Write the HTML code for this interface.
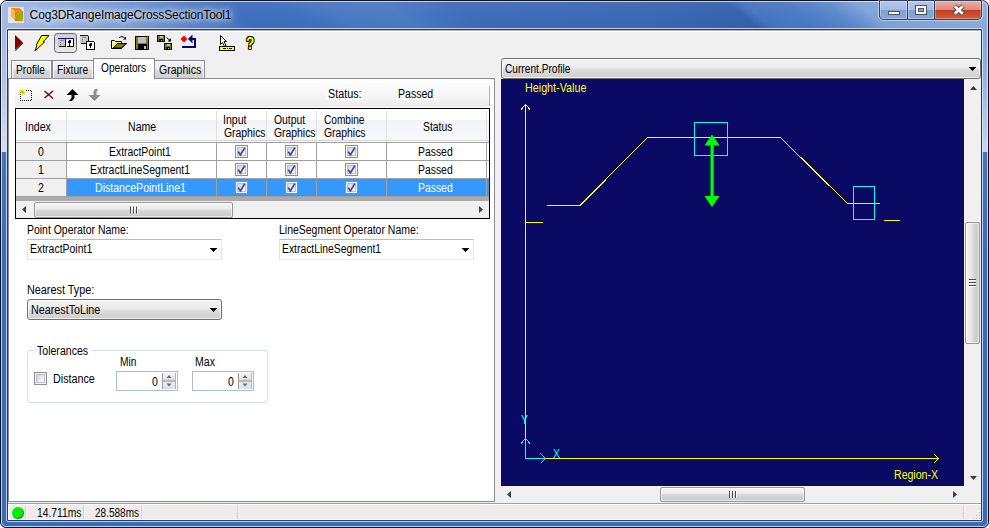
<!DOCTYPE html>
<html>
<head>
<meta charset="utf-8">
<title>Cog3DRangeImageCrossSectionTool1</title>
<style>
html,body{margin:0;padding:0;}
body{width:989px;height:528px;overflow:hidden;background:#fff;font-family:"Liberation Sans",sans-serif;font-size:11px;color:#000;position:relative;}
.a{position:absolute;}
.t{position:absolute;white-space:nowrap;font-size:12px;line-height:14px;height:14px;transform-origin:0 0;}
#frame{left:0;top:0;width:989px;height:528px;box-sizing:border-box;border-radius:7px 7px 6px 6px;border:1px solid #10131c;overflow:hidden;background:linear-gradient(#4473c1 151px,#3a6bbb 260px);}
#frame2{left:1px;top:1px;width:987px;height:526px;box-sizing:border-box;border-radius:6px 6px 5px 5px;border:1px solid rgba(235,243,255,.75);}
#tbar{left:0;top:0;width:989px;height:30px;background:linear-gradient(38.7deg,#a4bde5 11.7px,#9ab5e1 36.7px,#7c9fd7 80.5px,#5583c9 130.4px,#3f6ebb 161.7px,#4070bd 199.2px,#4979c3 224.2px,#4b7bc4 261.7px,#4473bf 280.4px,#3e6cb9 305.4px,#3b68b4 411.7px,#3562ac 475.4px,#4575c0 484.8px,#4a7ac4 511.7px,#5c89cc 538.0px,#7fa2d8 556.7px,#86a9dd 593.0px,#8dafe0 629.8px);}
#tbarhi{left:0;top:0;width:989px;height:30px;background:linear-gradient(rgba(255,255,255,.05),rgba(255,255,255,0) 60%,rgba(0,0,40,.03));}
#lside{left:0;top:30px;width:8px;height:121px;background:linear-gradient(#a4bde5,#a9c1e7 30%,#d0def3);}
#rside{left:981px;top:30px;width:8px;height:121px;background:linear-gradient(#86a8dc,#8fafe0 30%,#c5d6f0);}
#clientedge{left:6px;top:28px;width:977px;height:494px;box-sizing:border-box;border:1px solid rgba(214,228,247,.85);border-radius:2px;}
#clientedge2{left:7px;top:29px;width:975px;height:492px;box-sizing:border-box;border:1px solid #263b60;border-radius:1px;}
#client{left:8px;top:30px;width:973px;height:490px;background:#f0f0f0;}
#title{text-shadow:0 0 5px rgba(255,255,255,.95),0 0 9px rgba(255,255,255,.8),0 0 14px rgba(255,255,255,.6);}
.tab{box-sizing:border-box;border:1px solid #898c95;border-bottom:none;box-shadow:inset 1px 1px 0 rgba(255,255,255,.85),inset -1px 0 0 rgba(255,255,255,.85);background:linear-gradient(#f2f2f2 0%,#ebebeb 50%,#dddddd 50%,#cfcfcf 100%);}
#tabpage{left:8px;top:78px;width:487px;height:424px;box-sizing:border-box;background:#fff;border:1px solid #898c95;}
#grid{left:15px;top:108px;width:475px;height:111px;box-sizing:border-box;border:1px solid #000;background:#ababab;overflow:hidden;}
.ck{width:13px;height:13px;box-sizing:border-box;border:1px solid #8e8f8f;background:#f4f4f4;}
.ck:before{content:"";position:absolute;left:1px;top:1px;width:9px;height:9px;box-sizing:border-box;border:1px solid #b9c0c8;background:linear-gradient(135deg,#cfd4da,#f6f6f6 80%);}
.ck svg{position:absolute;left:-1px;top:-1px;}
.cmbw{box-sizing:border-box;border:1px solid #e2e3ea;border-color:#b9bcc4 #e2e6ec #e6eaf0 #e2e3ea;background:#fff;border-radius:1px;}
.cmbg{box-sizing:border-box;border:1px solid #707070;border-radius:3px;background:linear-gradient(#f2f2f2 0,#ebebeb 48%,#dddddd 52%,#cfcfcf 100%);box-shadow:inset 0 0 0 1px rgba(255,255,255,.7);}
.thumbh{box-sizing:border-box;border:1px solid #979797;border-radius:2px;background:linear-gradient(#f5f5f5 0,#e9e9e9 45%,#d9d9d9 50%,#c8c8c8 100%);box-shadow:inset 0 0 0 1px rgba(255,255,255,.6);}
.thumbv{box-sizing:border-box;border:1px solid #979797;border-radius:2px;background:linear-gradient(90deg,#f3f3f3 0,#e8e8e8 40%,#d6d6d8 60%,#c6c6ca 100%);box-shadow:inset 0 0 0 1px rgba(255,255,255,.6);}
</style>
</head>
<body>
<div id="frame" class="a"><div id="tbar" class="a"></div><div id="tbarhi" class="a"></div><div id="lside" class="a"></div><div id="rside" class="a"></div></div>
<div id="frame2" class="a"></div>
<div id="clientedge" class="a"></div><div id="clientedge2" class="a"></div>
<div id="client" class="a"></div>
<div class="a" style="left:8px;top:30px;width:973px;height:1px;background:#b8b8b8;"></div>
<div class="a" style="left:8px;top:31px;width:973px;height:1px;background:#fff;"></div>
<div class="a" style="left:8px;top:31px;width:1px;height:26px;background:#fff;"></div>
<svg class="a" style="left:8px;top:7px;" width="16" height="16" viewBox="0 0 16 16" shape-rendering="crispEdges">
<rect width="16" height="16" fill="#e4e4e4"/>
<path d="M3 1H11L15 5V14H7L3 10z" fill="#e67e00"/>
<path d="M3 1H11L15 5H7z" fill="#f28c0a"/>
<path d="M3 1L7 5V14L3 10z" fill="#ffb347"/>
<path d="M6.5 12.5L9.5 6.5H12.5V12.5H15" fill="none" stroke="#1fff1f" stroke-width="1" shape-rendering="auto"/>
</svg>
<div id="title" class="t" style="left:29.62px;top:8px;letter-spacing:-0.139px;">Cog3DRangeImageCrossSectionTool1</div>
<div class="a" style="left:878px;top:0;width:105px;height:21px;border-radius:0 0 6px 6px;background:rgba(225,236,252,.55);"></div>
<div class="a" style="left:879px;top:0;width:103px;height:20px;box-sizing:border-box;border:1px solid #33425f;border-top:none;border-radius:0 0 5px 5px;overflow:hidden;background:#33425f;">
<div class="a" style="left:0;top:1px;width:27px;height:18px;background:linear-gradient(#b4c9ea 0,#a3bce3 48%,#7f9fd0 50%,#88a8d8 100%);box-shadow:inset 0 0 0 1px rgba(255,255,255,.35);"></div>
<div class="a" style="left:28px;top:1px;width:26px;height:18px;background:linear-gradient(#b4c9ea 0,#a3bce3 48%,#7f9fd0 50%,#88a8d8 100%);box-shadow:inset 0 0 0 1px rgba(255,255,255,.35);"></div>
<div class="a" style="left:55px;top:1px;width:46px;height:18px;background:linear-gradient(#eab0a4 0,#dc8c7c 48%,#c23a22 50%,#d2603f 100%);box-shadow:inset 0 0 0 1px rgba(255,255,255,.3);"></div>
</div>
<svg class="a" style="left:879px;top:0;" width="102" height="20" viewBox="879 0 102 20">
<rect x="888.5" y="11.5" width="11" height="3" fill="#fff" stroke="#4b5568" stroke-width="1"/>
<rect x="915.5" y="5.5" width="11" height="9" fill="#fff" stroke="#4b5568" stroke-width="1"/>
<rect x="918.5" y="8.5" width="5" height="3" fill="#86a5d6" stroke="#4b5568" stroke-width="1"/>
<path d="M954.5 6L963 14M963 6L954.5 14" stroke="#4b4f5c" stroke-width="4.8" fill="none"/>
<path d="M954.8 6.3L962.7 13.7M962.7 6.3L954.8 13.7" stroke="#fff" stroke-width="2.8" fill="none"/>
</svg>
<svg class="a" style="left:8px;top:30px;" width="260" height="26" viewBox="8 30 260 26" shape-rendering="crispEdges">
<!-- run -->
<path d="M15 35L23 42.5L15 50z" fill="#800000" shape-rendering="auto"/>
<path d="M23 43L15.5 50.5" stroke="#000" stroke-width="1" shape-rendering="auto"/>
<!-- lightning -->
<path d="M41.500 35.500H49L43 42H44.500L35 51L37 45L36.500 44.500z" fill="#ffff00" stroke="#000" stroke-width="1" shape-rendering="auto"/>
<!-- pressed button -->
<defs><linearGradient id="pb" x1="0" y1="0" x2="0" y2="1"><stop offset="0" stop-color="#cfcfcf"/><stop offset="1" stop-color="#e9e9e9"/></linearGradient></defs><rect x="54.5" y="33.5" width="22" height="19" rx="3" ry="3" fill="url(#pb)" stroke="#6a6a6a" shape-rendering="auto"/>
<!-- icon3 -->
<rect x="58" y="38" width="8" height="9" fill="#c8c8c8"/><rect x="58" y="38" width="8" height="1" fill="#0000d0"/>
<path d="M58.5 46.5H65.5V39" fill="none" stroke="#000"/>
<rect x="60" y="40" width="4" height="1" fill="#909090"/><rect x="60" y="42" width="1" height="1" fill="#808080"/><rect x="60" y="44" width="1" height="1" fill="#808080"/>
<rect x="66" y="38" width="8" height="9" fill="#fff"/><rect x="66" y="38" width="8" height="1" fill="#0000d0"/>
<path d="M66.5 46.5H73.5V39" fill="none" stroke="#000"/>
<rect x="68" y="40" width="3" height="3" fill="#000"/><rect x="69" y="43" width="1" height="3" fill="#000"/><rect x="68" y="40" width="1" height="1" fill="#fff"/>
<!-- icon4 -->
<rect x="80" y="35" width="8" height="8" fill="#c8c8c8"/><rect x="80" y="35" width="8" height="1" fill="#0000d0"/>
<path d="M80.5 43.5H88.5V36" fill="none" stroke="#000"/>
<rect x="82" y="37" width="4" height="1" fill="#909090"/><rect x="82" y="39" width="1" height="1" fill="#808080"/><rect x="82" y="41" width="1" height="1" fill="#808080"/>
<rect x="86" y="41" width="8" height="8" fill="#fff"/><rect x="86" y="41" width="8" height="1" fill="#0000d0"/>
<path d="M86.5 42V49.5H94.5V42" fill="none" stroke="#000"/>
<rect x="89" y="43" width="3" height="3" fill="#000"/><rect x="90" y="46" width="1" height="2" fill="#000"/><rect x="89" y="43" width="1" height="1" fill="#fff"/>
<!-- open -->
<path d="M111.5 40.5H114.5L115.5 41.5H121.5V43.5H126.5L121.5 48.5H111.5z" fill="#ffff80" stroke="#000" shape-rendering="auto"/>
<path d="M113 48L117.5 43.5H126L121.5 48z" fill="#808000" stroke="#000" stroke-width="1" shape-rendering="auto"/>
<path d="M119 38Q122 35 125 38.5" fill="none" stroke="#000" shape-rendering="auto"/><path d="M123 39.5H126V36.5z" fill="#000" shape-rendering="auto"/>
<!-- save -->
<rect x="135" y="36" width="14" height="14" fill="#808000"/><rect x="135.5" y="36.5" width="13" height="13" fill="none" stroke="#000"/>
<rect x="138" y="37" width="8" height="6" fill="#c0c0c0"/><rect x="138" y="44" width="9" height="5" fill="#000"/><rect x="144" y="46" width="2" height="3" fill="#c0c0c0"/><rect x="147" y="37" width="1" height="1" fill="#fff"/>
<!-- save all -->
<rect x="157" y="35" width="8" height="7" fill="#000"/><rect x="158" y="36" width="6" height="5" fill="#808000"/><rect x="159.500" y="36" width="3" height="2" fill="#c0c0c0"/><rect x="159" y="39" width="4" height="2" fill="#000"/><rect x="161" y="40" width="1" height="1" fill="#c0c0c0"/>
<rect x="164" y="43" width="8" height="7" fill="#000"/><rect x="165" y="44" width="6" height="5" fill="#808000"/><rect x="166.500" y="44" width="3" height="2" fill="#c0c0c0"/><rect x="166" y="47" width="4" height="2" fill="#000"/><rect x="168" y="48" width="1" height="1" fill="#c0c0c0"/>
<path d="M166.500 37.500L170 40.500" stroke="#000" shape-rendering="auto"/><path d="M171 38V41.500H167.500z" fill="#000" shape-rendering="auto"/>
<!-- red diamond + blue arrow -->
<path d="M184 35.500L187.500 39L184 42.500L180.500 39z" fill="#ff0000" shape-rendering="auto"/>
<path d="M188 39L192.500 34.500V43.500z" fill="#000080" shape-rendering="auto"/>
<path d="M192 38H196V48H182V46H194V40H192z" fill="#000080"/>
<!-- cursor + ruler -->
<path d="M220.500 35.500V44.500L222.500 42.500L224.500 46.500L226 45.500L224 41.500H226.500z" fill="#fff" stroke="#000" shape-rendering="auto"/>
<rect x="219.500" y="46.500" width="15" height="4" fill="#ffff00" stroke="#000"/>
<rect x="223" y="48" width="3" height="1" fill="#000"/><rect x="227" y="48" width="1" height="1" fill="#000"/><rect x="229" y="48" width="3" height="1" fill="#000"/>
</svg>
<div id="qm" class="t" style="left:246px;top:34px;font-size:17px;line-height:19px;height:19px;font-weight:bold;color:#ffff00;text-shadow:1px 0 #000,-1px 0 #000,0 1px #000,0 -1px #000,1px 1px #000,-1px -1px #000,1px -1px #000,-1px 1px #000;transform:scaleX(0.8);">?</div>
<div id="tabpage" class="a"></div>
<div class="a tab" style="left:11px;top:60px;width:41px;height:18px;"></div>
<div class="a tab" style="left:52px;top:60px;width:42px;height:18px;"></div>
<div class="a tab" style="left:153px;top:60px;width:52px;height:18px;"></div>
<div class="a tab" style="left:93px;top:58px;width:62px;height:21px;background:#fff;"></div>
<div id="tProfile" class="t" style="left:15.58px;top:63px;transform:scaleX(0.8533);">Profile</div>
<div id="tFixture" class="t" style="left:56.92px;top:63px;transform:scaleX(0.8485);">Fixture</div>
<div id="tOperators" class="t" style="left:100.90px;top:61px;transform:scaleX(0.8442);">Operators</div>
<div id="tGraphics" class="t" style="left:158.88px;top:63px;transform:scaleX(0.8800);">Graphics</div>
<div class="a" style="left:15px;top:83px;width:475px;height:24px;border-radius:0 0 3px 3px;background:linear-gradient(#fcfcfc,#f6f6f6 50%,#ebebeb);"></div>
<div class="a" style="left:489px;top:86px;width:1px;height:20px;background:#b0b0b0;"></div>
<svg class="a" style="left:15px;top:83px;" width="100" height="24" viewBox="15 83 100 24" shape-rendering="crispEdges">
<path d="M20.500 92V100.500H31.500V90.500H26" fill="none" stroke="#000" stroke-width="1" stroke-dasharray="1 1"/>
<path d="M19 92H26M22.500 88.500V95.500M20 89.500L25 94.500M25 89.500L20 94.500" stroke="#e8e800" stroke-width="1" shape-rendering="auto"/>
<path d="M21 90.500L24 93.500" stroke="#707070" stroke-width="1" shape-rendering="auto"/>
<path d="M44.500 91L53 98.500M53 91L44.500 98" stroke="#800000" stroke-width="1.500" shape-rendering="auto"/>
<path d="M72.500 89L78.500 95H74.500V98L72 101H69L71.500 98V95H66.500z" fill="#000" shape-rendering="auto"/>
<path d="M94.500 101L100.500 95H96.500V92L98 89H95L93.500 91.500V95H88.500z" fill="#8c8c8c" shape-rendering="auto"/>
</svg>
<div class="a" style="left:325px;top:87px;width:40px;height:13px;background:#fbfbfb;"></div>
<div class="a" style="left:395px;top:87px;width:42px;height:13px;background:#fbfbfb;"></div>
<div id="sStatus" class="t" style="left:328.00px;top:87px;transform:scaleX(0.8976);">Status:</div>
<div id="sPassed" class="t" style="left:397.60px;top:87px;transform:scaleX(0.8800);">Passed</div>
<div id="grid" class="a">
<div class="a" style="left:0;top:0;width:473px;height:31px;background:linear-gradient(#fff 0,#fff 11px,#f3f4f7 11px,#f8f9fb 31px);"></div>
<div class="a" style="left:0;top:31px;width:473px;height:1px;background:#d5d5d5;"></div>
<div class="a" style="left:0;top:32px;width:473px;height:1px;background:#fff;"></div>
<div class="a" style="left:0;top:33px;width:473px;height:1px;background:#a0a0a0;"></div>
<div class="a" style="left:50px;top:2px;width:1px;height:29px;background:#dfe2e8;"></div>
<div class="a" style="left:200px;top:2px;width:1px;height:29px;background:#dfe2e8;"></div>
<div class="a" style="left:250px;top:2px;width:1px;height:29px;background:#dfe2e8;"></div>
<div class="a" style="left:300px;top:2px;width:1px;height:29px;background:#dfe2e8;"></div>
<div class="a" style="left:370px;top:2px;width:1px;height:29px;background:#dfe2e8;"></div>
<div class="a" style="left:470px;top:2px;width:1px;height:29px;background:#dfe2e8;"></div>
<div class="a" style="left:473px;top:2px;width:1px;height:29px;background:#dfe2e8;"></div>
<div class="a" style="left:0;top:34px;width:473px;height:17px;background:#fff;"></div>
<div class="a" style="left:0;top:51px;width:473px;height:1px;background:#a0a0a0;"></div>
<div class="a" style="left:0;top:34px;width:50px;height:17px;background:#f0f0f0;"></div>
<div class="a" style="left:50px;top:34px;width:1px;height:17px;background:#a0a0a0;"></div>
<div class="a" style="left:200px;top:34px;width:1px;height:17px;background:#a0a0a0;"></div>
<div class="a" style="left:250px;top:34px;width:1px;height:17px;background:#a0a0a0;"></div>
<div class="a" style="left:300px;top:34px;width:1px;height:17px;background:#a0a0a0;"></div>
<div class="a" style="left:370px;top:34px;width:1px;height:17px;background:#a0a0a0;"></div>
<div class="a" style="left:470px;top:34px;width:1px;height:17px;background:#a0a0a0;"></div>
<div class="a" style="left:473px;top:34px;width:1px;height:17px;background:#a0a0a0;"></div>
<div class="a ck" style="left:219px;top:36px;"><svg width="13" height="13" viewBox="0 0 13 13"><path d="M3.2 6.6 L5.4 10 L9.8 2.6" fill="none" stroke="#31479b" stroke-width="1.7"/></svg></div>
<div class="a ck" style="left:269px;top:36px;"><svg width="13" height="13" viewBox="0 0 13 13"><path d="M3.2 6.6 L5.4 10 L9.8 2.6" fill="none" stroke="#31479b" stroke-width="1.7"/></svg></div>
<div class="a ck" style="left:329px;top:36px;"><svg width="13" height="13" viewBox="0 0 13 13"><path d="M3.2 6.6 L5.4 10 L9.8 2.6" fill="none" stroke="#31479b" stroke-width="1.7"/></svg></div>
<div class="a" style="left:0;top:52px;width:473px;height:17px;background:#fff;"></div>
<div class="a" style="left:0;top:69px;width:473px;height:1px;background:#a0a0a0;"></div>
<div class="a" style="left:0;top:52px;width:50px;height:17px;background:#f0f0f0;"></div>
<div class="a" style="left:50px;top:52px;width:1px;height:17px;background:#a0a0a0;"></div>
<div class="a" style="left:200px;top:52px;width:1px;height:17px;background:#a0a0a0;"></div>
<div class="a" style="left:250px;top:52px;width:1px;height:17px;background:#a0a0a0;"></div>
<div class="a" style="left:300px;top:52px;width:1px;height:17px;background:#a0a0a0;"></div>
<div class="a" style="left:370px;top:52px;width:1px;height:17px;background:#a0a0a0;"></div>
<div class="a" style="left:470px;top:52px;width:1px;height:17px;background:#a0a0a0;"></div>
<div class="a" style="left:473px;top:52px;width:1px;height:17px;background:#a0a0a0;"></div>
<div class="a ck" style="left:219px;top:54px;"><svg width="13" height="13" viewBox="0 0 13 13"><path d="M3.2 6.6 L5.4 10 L9.8 2.6" fill="none" stroke="#31479b" stroke-width="1.7"/></svg></div>
<div class="a ck" style="left:269px;top:54px;"><svg width="13" height="13" viewBox="0 0 13 13"><path d="M3.2 6.6 L5.4 10 L9.8 2.6" fill="none" stroke="#31479b" stroke-width="1.7"/></svg></div>
<div class="a ck" style="left:329px;top:54px;"><svg width="13" height="13" viewBox="0 0 13 13"><path d="M3.2 6.6 L5.4 10 L9.8 2.6" fill="none" stroke="#31479b" stroke-width="1.7"/></svg></div>
<div class="a" style="left:0;top:70px;width:473px;height:17px;background:#3399ff;"></div>
<div class="a" style="left:0;top:87px;width:473px;height:1px;background:#a0a0a0;"></div>
<div class="a" style="left:0;top:70px;width:50px;height:17px;background:#f0f0f0;"></div>
<div class="a" style="left:50px;top:70px;width:1px;height:17px;background:#a0a0a0;"></div>
<div class="a" style="left:200px;top:70px;width:1px;height:17px;background:#a0a0a0;"></div>
<div class="a" style="left:250px;top:70px;width:1px;height:17px;background:#a0a0a0;"></div>
<div class="a" style="left:300px;top:70px;width:1px;height:17px;background:#a0a0a0;"></div>
<div class="a" style="left:370px;top:70px;width:1px;height:17px;background:#a0a0a0;"></div>
<div class="a" style="left:470px;top:70px;width:1px;height:17px;background:#a0a0a0;"></div>
<div class="a" style="left:473px;top:70px;width:1px;height:17px;background:#a0a0a0;"></div>
<div class="a ck" style="left:219px;top:72px;"><svg width="13" height="13" viewBox="0 0 13 13"><path d="M3.2 6.6 L5.4 10 L9.8 2.6" fill="none" stroke="#31479b" stroke-width="1.7"/></svg></div>
<div class="a ck" style="left:269px;top:72px;"><svg width="13" height="13" viewBox="0 0 13 13"><path d="M3.2 6.6 L5.4 10 L9.8 2.6" fill="none" stroke="#31479b" stroke-width="1.7"/></svg></div>
<div class="a ck" style="left:329px;top:72px;"><svg width="13" height="13" viewBox="0 0 13 13"><path d="M3.2 6.6 L5.4 10 L9.8 2.6" fill="none" stroke="#31479b" stroke-width="1.7"/></svg></div>
<div class="a" style="left:0;top:92px;width:473px;height:17px;background:#f0f0f0;"></div>
<div class="a thumbh" style="left:18px;top:93px;width:199px;height:16px;"></div>
<svg class="a" style="left:0;top:92px;" width="473" height="17"><path d="M10 5v7l-4-3.500z M463 5v7l4-3.500z" fill="#3c3c3c"/><path d="M114.5 5.5v7M117.5 5.5v7M120.5 5.5v7" stroke="#4a4a4a" stroke-width="1"/><path d="M115.5 5.5v7M118.5 5.5v7M121.5 5.5v7" stroke="#fff" stroke-width="1" opacity=".8"/></svg>
</div>
<div id="hIndex" class="t" style="left:25.10px;top:120px;transform:scaleX(0.8800);">Index</div>
<div id="hName" class="t" style="left:127.82px;top:120px;transform:scaleX(0.8800);">Name</div>
<div id="hIn1" class="t" style="left:222.56px;top:113px;transform:scaleX(0.8800);">Input</div>
<div id="hIn2" class="t" style="left:223.80px;top:126px;transform:scaleX(0.8651);">Graphics</div>
<div id="hOut1" class="t" style="left:273.88px;top:113px;transform:scaleX(0.8648);">Output</div>
<div id="hOut2" class="t" style="left:273.88px;top:126px;transform:scaleX(0.8651);">Graphics</div>
<div id="hCo1" class="t" style="left:323.75px;top:113px;transform:scaleX(0.8415);">Combine</div>
<div id="hCo2" class="t" style="left:323.75px;top:126px;transform:scaleX(0.8651);">Graphics</div>
<div id="hStatus" class="t" style="left:422.85px;top:120px;transform:scaleX(0.8624);">Status</div>
<div id="r0i" class="t" style="left:38.00px;top:145px;transform:scaleX(0.8800);">0</div>
<div id="r1i" class="t" style="left:38.14px;top:163px;transform:scaleX(0.8800);">1</div>
<div id="r2i" class="t" style="left:38.00px;top:181px;transform:scaleX(0.8800);">2</div>
<div id="r0n" class="t" style="left:108.60px;top:145px;transform:scaleX(0.8669);">ExtractPoint1</div>
<div id="r1n" class="t" style="left:90.08px;top:163px;transform:scaleX(0.8716);">ExtractLineSegment1</div>
<div id="r2n" class="t" style="left:95.08px;top:181px;transform:scaleX(0.8800);color:#fff;">DistancePointLine1</div>
<div id="r0s" class="t" style="left:417.82px;top:145px;transform:scaleX(0.8667);">Passed</div>
<div id="r1s" class="t" style="left:417.82px;top:163px;transform:scaleX(0.8667);">Passed</div>
<div id="r2s" class="t" style="left:417.82px;top:181px;transform:scaleX(0.8667);color:#fff;">Passed</div>
<div id="lPoint" class="t" style="left:27.47px;top:223px;transform:scaleX(0.8710);">Point Operator Name:</div>
<div id="lLine" class="t" style="left:279.47px;top:223px;transform:scaleX(0.8724);">LineSegment Operator Name:</div>
<div class="a cmbw" style="left:27px;top:239px;width:195px;height:21px;"></div>
<div class="a cmbw" style="left:279px;top:239px;width:195px;height:21px;"></div>
<div id="cPoint" class="t" style="left:30.08px;top:242px;transform:scaleX(0.8721);">ExtractPoint1</div>
<div id="cLine" class="t" style="left:281.82px;top:242px;transform:scaleX(0.8631);">ExtractLineSegment1</div>
<svg class="a" style="left:210px;top:248px;" width="7" height="4" shape-rendering="crispEdges"><path d="M0 0h7v1h-7z M1 1h5v1h-5z M2 2h3v1h-3z M3 3h1v1h-1z" fill="#000"/></svg>
<svg class="a" style="left:462px;top:248px;" width="7" height="4" shape-rendering="crispEdges"><path d="M0 0h7v1h-7z M1 1h5v1h-5z M2 2h3v1h-3z M3 3h1v1h-1z" fill="#000"/></svg>
<div id="lNearest" class="t" style="left:27.47px;top:283px;transform:scaleX(0.9020);">Nearest Type:</div>
<div class="a cmbg" style="left:27px;top:299px;width:195px;height:21px;"></div>
<div id="cNearest" class="t" style="left:30.82px;top:303px;transform:scaleX(0.8958);">NearestToLine</div>
<svg class="a" style="left:210px;top:308px;" width="7" height="4" shape-rendering="crispEdges"><path d="M0 0h7v1h-7z M1 1h5v1h-5z M2 2h3v1h-3z M3 3h1v1h-1z" fill="#000"/></svg>
<div class="a" style="left:27px;top:350px;width:241px;height:53px;box-sizing:border-box;border:1px solid #d5dfe5;border-radius:3px;"></div>
<div class="a" style="left:34px;top:348px;width:57px;height:5px;background:#fff;"></div>
<div id="gTol" class="t" style="left:36.88px;top:344px;transform:scaleX(0.8800);">Tolerances</div>
<div id="gMin" class="t" style="left:120.08px;top:355px;transform:scaleX(0.8478);">Min</div>
<div id="gMax" class="t" style="left:195.08px;top:355px;transform:scaleX(0.8800);">Max</div>
<div class="a" style="left:34px;top:372px;width:13px;height:13px;box-sizing:border-box;border:1px solid #8e8f8f;background:#f4f4f4;"><div class="a" style="left:1px;top:1px;width:9px;height:9px;box-sizing:border-box;border:1px solid #b9c0c8;background:linear-gradient(135deg,#cfd4da,#f6f6f6 80%);"></div></div>
<div id="gDist" class="t" style="left:52.97px;top:372px;transform:scaleX(0.8950);">Distance</div>
<div class="a" style="left:116px;top:371px;width:62px;height:20px;box-sizing:border-box;border:1px solid #a9bde0;background:#fff;"></div>
<div class="a" style="left:162px;top:373px;width:14px;height:16px;background:linear-gradient(#f4f4f4 0,#e4e4e4 40%,#b8b8b8 44%,#b8b8b8 56%,#f0f0f0 60%,#dcdcdc 100%);border-left:1px solid #9a9a9a;border-right:1px solid #b4b4b4;box-sizing:border-box;"></div>
<svg class="a" style="left:162px;top:373px;" width="14" height="16"><path d="M4.500 5h5l-2.500-3z M4.500 10.500h5l-2.500 3z" fill="#4d66c6"/></svg>
<div class="a" style="left:192px;top:371px;width:62px;height:20px;box-sizing:border-box;border:1px solid #a9bde0;background:#fff;"></div>
<div class="a" style="left:238px;top:373px;width:14px;height:16px;background:linear-gradient(#f4f4f4 0,#e4e4e4 40%,#b8b8b8 44%,#b8b8b8 56%,#f0f0f0 60%,#dcdcdc 100%);border-left:1px solid #9a9a9a;border-right:1px solid #b4b4b4;box-sizing:border-box;"></div>
<svg class="a" style="left:238px;top:373px;" width="14" height="16"><path d="M4.500 5h5l-2.500-3z M4.500 10.500h5l-2.500 3z" fill="#4d66c6"/></svg>
<div id="n0" class="t" style="left:152.10px;top:375px;transform:scaleX(0.8800);">0</div>
<div id="n1" class="t" style="left:228.10px;top:375px;transform:scaleX(0.8800);">0</div>
<div class="a cmbg" style="left:501px;top:58px;width:480px;height:21px;"></div>
<div id="cCur" class="t" style="left:504.90px;top:62px;transform:scaleX(0.8459);">Current.Profile</div>
<svg class="a" style="left:969px;top:67px;" width="7" height="4" shape-rendering="crispEdges"><path d="M0 0h7v1h-7z M1 1h5v1h-5z M2 2h3v1h-3z M3 3h1v1h-1z" fill="#000"/></svg>
<div class="a" style="left:501px;top:79px;width:463px;height:407px;background:#0a0a64;"></div>
<svg class="a" style="left:501px;top:79px;" width="463" height="407" viewBox="501 79 463 407" shape-rendering="crispEdges">
<g fill="none" stroke="#ffff00" stroke-width="1">
<path d="M525.500 104V438M546 458.500H939"/>
<path d="M521 109.500L525.500 104.500L530 109.500"/>
<path d="M934 454L938.500 458.500L934 463"/>
<path d="M526 222.500H543"/>
<path d="M547 205.500H580L647.500 137.500H780.500L847.500 203.500H880"/>
<path d="M884 220.500H900"/>
</g>
<g fill="none" stroke="#00ffff" stroke-width="1">
<rect x="694.500" y="122.500" width="33" height="33"/>
<rect x="853.500" y="186.500" width="21" height="33"/>
<path d="M525.500 438V458.500H546"/>
<path d="M521 443.500L525.500 438.500L530 443.500"/>
<path d="M540.500 453.500L545.500 458.500L540.500 463.500"/>
</g>
<g fill="#00ff00" stroke="none" shape-rendering="auto">
<rect x="710.500" y="140" width="3.200" height="62"/>
<path d="M712 134.500L719.500 145.500H704.500z"/>
<path d="M712 207L719.500 196H704.500z"/>
</g>
</svg>
<div id="dH" class="t" style="left:525.47px;top:81px;transform:scaleX(0.8961);color:#ffff00;">Height-Value</div>
<div id="dR" class="t" style="left:894.34px;top:468px;transform:scaleX(0.8800);color:#ffff00;">Region-X</div>
<div id="dY" class="t" style="left:521.20px;top:413px;transform:scaleX(0.8800);color:#00ffff;">Y</div>
<div id="dX" class="t" style="left:553.10px;top:447px;transform:scaleX(0.8800);color:#00ffff;">X</div>
<div class="a" style="left:964px;top:79px;width:17px;height:407px;background:#f0f0f0;"></div>
<div class="a thumbv" style="left:965px;top:222px;width:15px;height:122px;"></div>
<svg class="a" style="left:964px;top:79px;" width="17" height="407"><path d="M6 11h7l-3.500-4z M6 397h7l-3.500 4z" fill="#3c3c3c"/><path d="M5 200.500h7M5 203.500h7M5 206.500h7" stroke="#4a4a4a"/><path d="M5 201.500h7M5 204.500h7M5 207.500h7" stroke="#fff" opacity=".8"/></svg>
<div class="a" style="left:501px;top:486px;width:480px;height:17px;background:#f0f0f0;"></div>
<div class="a thumbh" style="left:660px;top:487px;width:145px;height:15px;"></div>
<svg class="a" style="left:501px;top:486px;" width="480" height="17"><path d="M10 5v7l-4-3.500z M452 5v7l4-3.500z" fill="#3c3c3c"/><path d="M228.500 5v7M231.500 5v7M234.500 5v7" stroke="#4a4a4a"/><path d="M229.500 5v7M232.500 5v7M235.500 5v7" stroke="#fff" opacity=".8"/></svg>
<div class="a" style="left:8px;top:503px;width:973px;height:1px;background:#a0a0a0;"></div>
<div class="a" style="left:8px;top:504px;width:973px;height:16px;background:#f0ecec;"></div>
<div class="a" style="left:8px;top:504px;width:973px;height:1px;background:#fff;"></div>
<div class="a" style="left:8px;top:519px;width:973px;height:1px;background:#fff;"></div>
<div class="a" style="left:8px;top:504px;width:1px;height:16px;background:#fff;"></div>
<div class="a" style="left:12px;top:507px;width:12px;height:12px;border-radius:6px;background:#00ee00;box-shadow:inset -1px -1px 1px rgba(0,110,0,.6);"></div>
<div class="a" style="left:25px;top:506px;width:1px;height:13px;background:#d0cdcd;"></div><div class="a" style="left:26px;top:506px;width:1px;height:13px;background:#f8f6f6;"></div>
<div class="a" style="left:83px;top:506px;width:1px;height:13px;background:#d0cdcd;"></div><div class="a" style="left:84px;top:506px;width:1px;height:13px;background:#f8f6f6;"></div>
<div class="a" style="left:141px;top:506px;width:1px;height:13px;background:#d0cdcd;"></div><div class="a" style="left:142px;top:506px;width:1px;height:13px;background:#f8f6f6;"></div>
<div class="a" style="left:237px;top:506px;width:1px;height:13px;background:#d0cdcd;"></div><div class="a" style="left:238px;top:506px;width:1px;height:13px;background:#f8f6f6;"></div>
<div class="a" style="left:963px;top:506px;width:1px;height:13px;background:#d0cdcd;"></div><div class="a" style="left:964px;top:506px;width:1px;height:13px;background:#f8f6f6;"></div>
<div id="st1" class="t" style="left:37.00px;top:506px;transform:scaleX(0.8582);">14.711ms</div>
<div id="st2" class="t" style="left:94.70px;top:506px;transform:scaleX(0.8346);">28.588ms</div>
<svg class="a" style="left:968px;top:507px;" width="13" height="13" viewBox="968 507 13 13" shape-rendering="crispEdges"><path d="M978 511h1v1h-1z M975 514h1v1h-1z M978 514h1v1h-1z M972 517h1v1h-1z M975 517h1v1h-1z M978 517h1v1h-1z" fill="#fff"/><path d="M979 512h1v1h-1z M976 515h1v1h-1z M979 515h1v1h-1z M973 518h1v1h-1z M976 518h1v1h-1z M979 518h1v1h-1z" fill="#b9b5b5"/></svg>
</body>
</html>
